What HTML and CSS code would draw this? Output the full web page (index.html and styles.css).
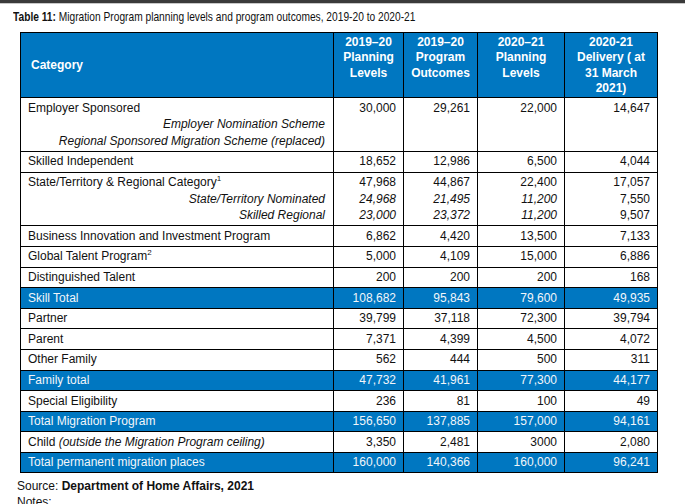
FILE: index.html
```html
<!DOCTYPE html>
<html>
<head>
<meta charset="utf-8">
<link rel="stylesheet" href="styles.css">
</head>
<body>
<div class="topbar"></div>
<div class="page">
  <p class="title"><span class="title-text"><b>Table 11:</b> Migration Program planning levels and program outcomes, 2019-20 to 2020-21</span></p>
  <table class="mig">
    <colgroup>
      <col class="c-cat"><col class="c-a"><col class="c-b"><col class="c-c"><col class="c-d">
    </colgroup>
    <thead>
      <tr>
        <th class="cat">Category</th>
        <th>2019–20<br>Planning<br>Levels</th>
        <th>2019–20<br>Program<br>Outcomes</th>
        <th>2020–21<br>Planning<br>Levels</th>
        <th>2020-21<br>Delivery ( at<br>31 March<br>2021)</th>
      </tr>
    </thead>
    <tbody>
      <tr>
        <td class="lbl">Employer Sponsored<div class="sub">Employer Nomination Scheme</div><div class="sub">Regional Sponsored Migration Scheme (replaced)</div></td>
        <td>30,000</td><td>29,261</td><td>22,000</td><td>14,647</td>
      </tr>
      <tr><td class="lbl">Skilled Independent</td><td>18,652</td><td>12,986</td><td>6,500</td><td>4,044</td></tr>
      <tr>
        <td class="lbl">State/Territory &amp; Regional Category<sup>1</sup><div class="sub">State/Territory Nominated</div><div class="sub">Skilled Regional</div></td>
        <td>47,968<div class="it">24,968</div><div class="it">23,000</div></td>
        <td>44,867<div class="it">21,495</div><div class="it">23,372</div></td>
        <td>22,400<div class="it">11,200</div><div class="it">11,200</div></td>
        <td>17,057<div>7,550</div><div>9,507</div></td>
      </tr>
      <tr><td class="lbl">Business Innovation and Investment Program</td><td>6,862</td><td>4,420</td><td>13,500</td><td>7,133</td></tr>
      <tr><td class="lbl">Global Talent Program<sup>2</sup></td><td>5,000</td><td>4,109</td><td>15,000</td><td>6,886</td></tr>
      <tr><td class="lbl">Distinguished Talent</td><td>200</td><td>200</td><td>200</td><td>168</td></tr>
      <tr class="total"><td class="lbl">Skill Total</td><td>108,682</td><td>95,843</td><td>79,600</td><td>49,935</td></tr>
      <tr><td class="lbl">Partner</td><td>39,799</td><td>37,118</td><td>72,300</td><td>39,794</td></tr>
      <tr><td class="lbl">Parent</td><td>7,371</td><td>4,399</td><td>4,500</td><td>4,072</td></tr>
      <tr><td class="lbl">Other Family</td><td>562</td><td>444</td><td>500</td><td>311</td></tr>
      <tr class="total"><td class="lbl">Family total</td><td>47,732</td><td>41,961</td><td>77,300</td><td>44,177</td></tr>
      <tr><td class="lbl">Special Eligibility</td><td>236</td><td>81</td><td>100</td><td>49</td></tr>
      <tr class="total"><td class="lbl">Total Migration Program</td><td>156,650</td><td>137,885</td><td>157,000</td><td>94,161</td></tr>
      <tr><td class="lbl">Child <i>(outside the Migration Program ceiling)</i></td><td>3,350</td><td>2,481</td><td>3000</td><td>2,080</td></tr>
      <tr class="total"><td class="lbl">Total permanent migration places</td><td>160,000</td><td>140,366</td><td>160,000</td><td>96,241</td></tr>
    </tbody>
  </table>
  <p class="source">Source: <b>Department of Home Affairs, 2021</b></p>
  <p class="notes">Notes:</p>
</div>
</body>
</html>
```

FILE: styles.css
```css
html, body {
  margin: 0;
  padding: 0;
  background: #ffffff;
  overflow: hidden;
}
body {
  font-family: "Liberation Sans", Arial, sans-serif;
  color: #111;
  width: 685px;
  height: 504px;
}
.topbar {
  height: 3px;
  background: #3a3a3a;
  border-bottom: 1px solid #c8c8c8;
}
.page {
  padding: 0 0 0 13px;
}
.title {
  margin: 6px 0 0 0;
  font-size: 12.6px;
  line-height: 15px;
  height: 22px;
  white-space: nowrap;
}
.title-text {
  display: inline-block;
  transform: scaleX(0.81);
  transform-origin: 0 50%;
}
.mig {
  margin-left: 7px;
  border-collapse: collapse;
  table-layout: fixed;
  width: 637px;
  font-size: 12px;
}
.c-cat { width: 313px; }
.c-a { width: 70px; }
.c-b { width: 74px; }
.c-c { width: 87px; }
.c-d { width: 93px; }
.mig th {
  background: #0077c1;
  color: #ffffff;
  font-weight: bold;
  border: 1px solid #000;
  line-height: 15.3px;
  padding: 2px 1px 1px;
  vertical-align: top;
  text-align: center;
  white-space: nowrap;
}
.mig th.cat {
  text-align: left;
  vertical-align: middle;
  padding-left: 10px;
}
.mig td {
  border: 1px solid #000;
  line-height: 16.6px;
  padding: 1.5px 7px 1.5px 7px;
  vertical-align: top;
  text-align: right;
  white-space: nowrap;
}
.mig td.lbl {
  text-align: left;
}
.mig .sub {
  text-align: right;
  font-style: italic;
  padding-right: 1px;
}
.mig .it {
  font-style: italic;
}
.mig sup {
  font-size: 8px;
  line-height: 0;
  vertical-align: 5px;
}
.mig tr.total td {
  background: #0077c1;
  color: #f2f6fa;
}
.source {
  margin: 6px 0 0 4px;
  font-size: 12px;
  line-height: 15px;
}
.notes {
  margin: 1px 0 0 4px;
  font-size: 12px;
  line-height: 15px;
}
```
